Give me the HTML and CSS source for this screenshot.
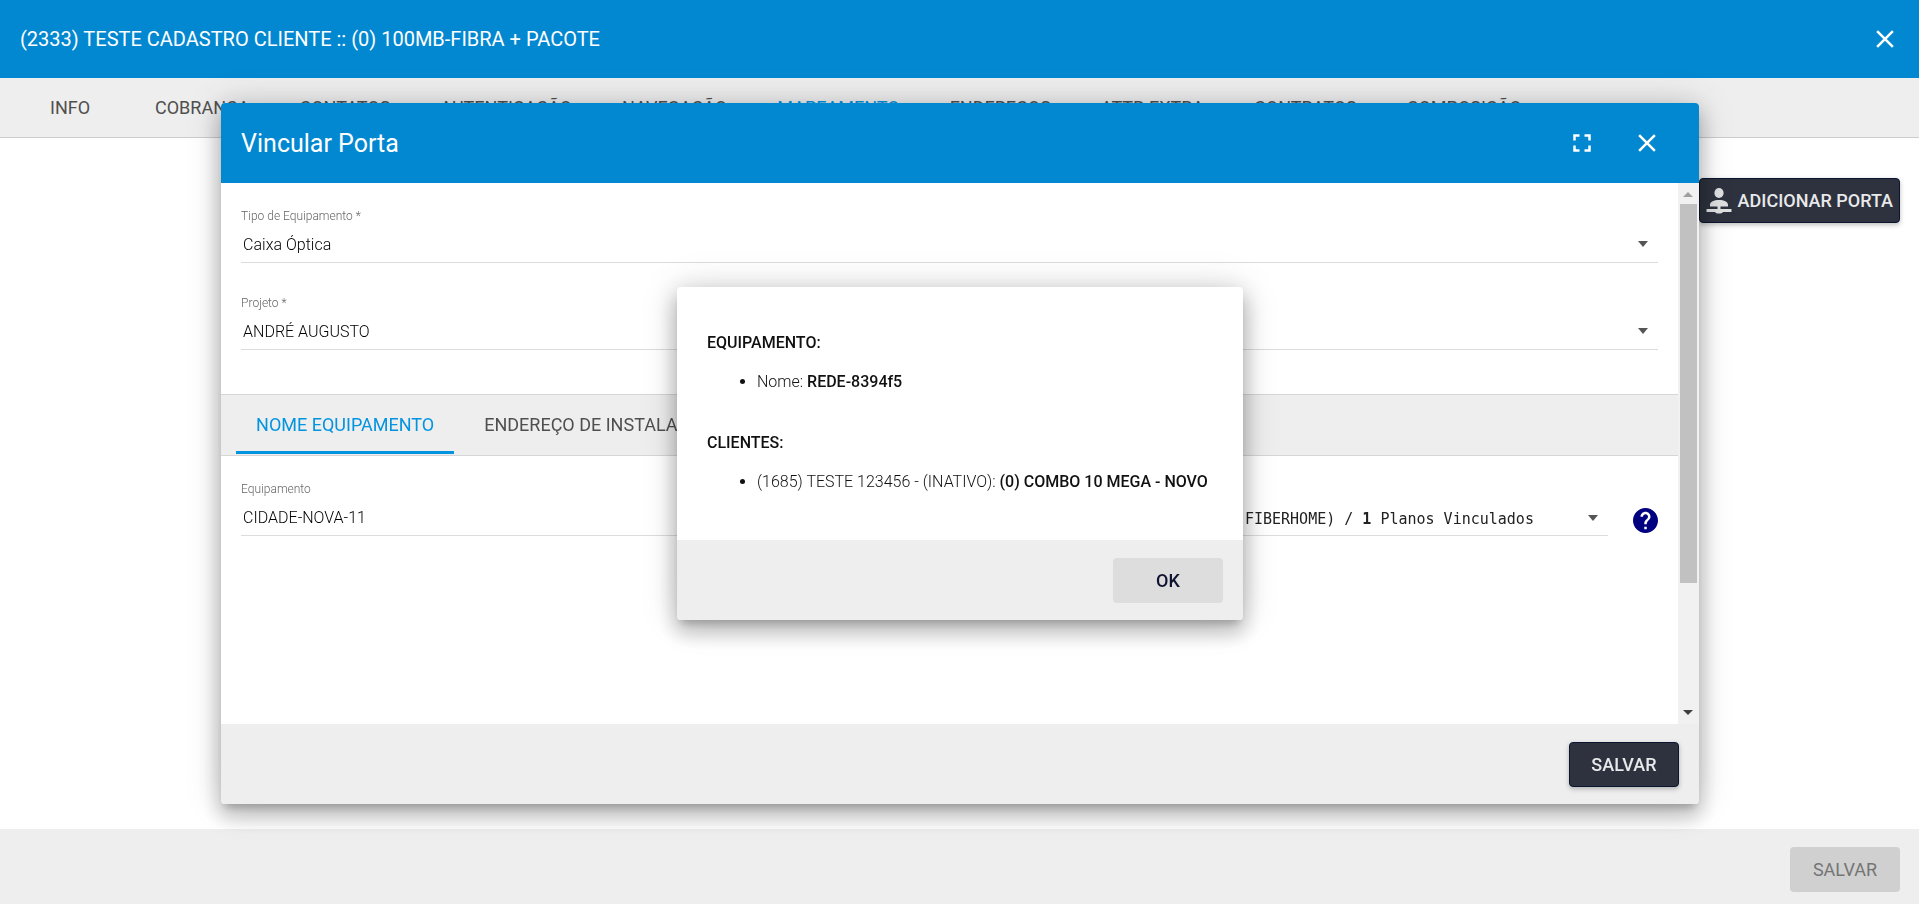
FILE: index.html
```html
<!DOCTYPE html>
<html lang="pt-BR">
<head>
<meta charset="utf-8">
<title>Vincular Porta</title>
<link rel="stylesheet" href="styles.css">
</head>
<body>
<div class="page">
  <header class="page-header">
    <h1 class="page-title">(2333) TESTE CADASTRO CLIENTE :: (0) 100MB-FIBRA + PACOTE</h1>
    <button class="icon-button" type="button" aria-label="Fechar">
      <svg class="icon" viewBox="0 0 24 24"><path d="M19 6.41 17.59 5 12 10.59 6.41 5 5 6.41 10.59 12 5 17.59 6.41 19 12 13.41 17.59 19 19 17.59 13.41 12z"/></svg>
    </button>
  </header>
  <nav class="tabs page-tabs">
    <button class="tab" type="button">INFO</button>
    <button class="tab" type="button">COBRANÇA</button>
    <button class="tab" type="button">CONTATOS</button>
    <button class="tab" type="button">AUTENTICAÇÃO</button>
    <button class="tab" type="button">NAVEGAÇÃO</button>
    <button class="tab tab-current" type="button">MAPEAMENTO</button>
    <button class="tab" type="button">ENDEREÇOS</button>
    <button class="tab" type="button">ATTR.EXTRA</button>
    <button class="tab" type="button">CONTRATOS</button>
    <button class="tab" type="button">COMPOSIÇÃO</button>
  </nav>
  <main class="page-main">
    <button class="button button-dark button-add" type="button">
      <svg class="add-icon" viewBox="0 0 26 26"><ellipse cx="13" cy="5" rx="4.6" ry="5"/><path d="M4 18.500v-1.500c0-3.500 4-5 9-5s9 1.500 9 5v1.500h-7.500V21H25.500v3H17c-.6 1-2.200 1.600-4 1.600S9.600 25 9 24H.5v-3h11v-2.500z"/></svg>
      ADICIONAR PORTA
    </button>
  </main>
  <footer class="page-footer">
    <button class="button button-disabled" type="button" disabled>SALVAR</button>
  </footer>
</div>

<div class="overlay">
  <section class="dialog" role="dialog" aria-label="Vincular Porta">
    <header class="dialog-header">
      <h2 class="dialog-title">Vincular Porta</h2>
      <button class="icon-button" type="button" aria-label="Tela cheia">
        <svg class="icon" viewBox="0 0 24 24"><path d="M7 14H5v5h5v-2H7v-3zm-2-4h2V7h3V5H5v5zm12 7h-3v2h5v-5h-2v3zM14 5v2h3v3h2V5h-5z"/></svg>
      </button>
      <button class="icon-button" type="button" aria-label="Fechar">
        <svg class="icon" viewBox="0 0 24 24"><path d="M19 6.410 17.590 5 12 10.590 6.410 5 5 6.410 10.590 12 5 17.590 6.410 19 12 13.410 17.590 19 19 17.590 13.410 12z"/></svg>
      </button>
    </header>
    <div class="dialog-body">
      <div class="dialog-content">
        <div class="fields">
          <div class="field">
            <label class="field-label" for="tipo">Tipo de Equipamento *</label>
            <div class="field-box">
              <select class="field-control" id="tipo"><option>Caixa Óptica</option></select>
              <span class="caret"></span>
            </div>
          </div>
          <div class="field">
            <label class="field-label" for="projeto">Projeto *</label>
            <div class="field-box">
              <select class="field-control" id="projeto"><option>ANDRÉ AUGUSTO</option></select>
              <span class="caret"></span>
            </div>
          </div>
        </div>
        <div class="tabs dialog-tabs">
          <button class="tab tab-current" type="button">NOME EQUIPAMENTO</button>
          <button class="tab" type="button">ENDEREÇO DE INSTALAÇÃO</button>
        </div>
        <div class="fields fields-row">
          <div class="field field-grow">
            <label class="field-label" for="equipamento">Equipamento</label>
            <div class="field-box"><input class="field-control" id="equipamento" type="text" value="CIDADE-NOVA-11"></div>
          </div>
          <div class="field field-plan">
            <button class="field-box field-choice" type="button" aria-haspopup="listbox" aria-label="Porta">
              <span class="choice-text">(FIBERHOME) / <b>1</b> Planos Vinculados</span>
              <span class="caret"></span>
            </button>
          </div>
          <button class="help-button" type="button" aria-label="Ajuda">
            <svg class="help-icon" viewBox="2 2 20 20"><path d="M12 2C6.480 2 2 6.480 2 12s4.480 10 10 10 10-4.480 10-10S17.520 2 12 2zm1 17h-2v-2h2v2zm2.070-7.750-.9.920C13.450 12.900 13 13.500 13 15h-2v-.5c0-1.100.450-2.100 1.170-2.830l1.240-1.260c.370-.360.590-.860.590-1.410 0-1.100-.9-2-2-2s-2 .9-2 2H8c0-2.210 1.790-4 4-4s4 1.790 4 4c0 .880-.360 1.680-.930 2.250z"/></svg>
          </button>
        </div>
      </div>
      <div class="scrollbar" aria-hidden="true">
        <span class="scroll-arrow scroll-up"></span>
        <span class="scroll-thumb"></span>
        <span class="scroll-arrow scroll-down"></span>
      </div>
    </div>
    <footer class="dialog-footer">
      <button class="button button-dark" type="button">SALVAR</button>
    </footer>
  </section>
</div>

<div class="overlay">
  <section class="dialog alert" role="alertdialog" aria-label="Equipamento">
    <div class="alert-body">
      <strong class="alert-heading">EQUIPAMENTO:</strong>
      <ul class="alert-list"><li>Nome: <strong>REDE-8394f5</strong></li></ul>
      <strong class="alert-heading">CLIENTES:</strong>
      <ul class="alert-list"><li>(1685) TESTE 123456 - (INATIVO): <strong>(0) COMBO 10 MEGA - NOVO</strong></li></ul>
    </div>
    <footer class="dialog-footer">
      <button class="button button-plain" type="button">OK</button>
    </footer>
  </section>
</div>
</body>
</html>
```
FILE: styles.css
```css
* {
  box-sizing: border-box;
}

body {
  margin: 0;
  font-family: Roboto, "Liberation Sans", sans-serif;
  font-size: 16px;
  font-weight: 300;
  color: #000;
  background: #fff;
}

button,
input,
select {
  font: inherit;
  color: inherit;
  border: 0;
  padding: 0;
  margin: 0;
  background: none;
}

h1,
h2 {
  margin: 0;
}

strong {
  font-weight: 500;
}

.page {
  display: flex;
  flex-direction: column;
  height: 100vh;
}

.page-header {
  display: flex;
  align-items: center;
  justify-content: space-between;
  height: 78px;
  padding: 0 19px 0 20px;
  background: #0288d1;
  color: #fff;
}

.page-title {
  font-size: 20px;
  font-weight: 400;
}

.icon-button {
  display: flex;
}

.icon {
  width: 30px;
  height: 30px;
  fill: #fff;
}

.tabs {
  display: flex;
  gap: 10px;
  background: #eee;
  border-bottom: 1px solid #ccc;
}

.page-tabs {
  height: 60px;
  padding: 0 30px;
}

.tab {
  min-width: 95px;
  padding: 0 20px;
  border-bottom: 3px solid transparent;
  border-top: 3px solid transparent;
  font-size: 18px;
  font-weight: 400;
  text-align: left;
  color: #4f4f4f;
}

.tab-current {
  color: #0394e0;
}

.page-main {
  flex: 1;
  display: flex;
  justify-content: flex-end;
  align-items: flex-start;
  padding: 40px 19px;
}

.page-footer {
  display: flex;
  justify-content: flex-end;
  padding: 18px 19px 12px;
  background: #eee;
}

.button {
  height: 45px;
  min-width: 110px;
  border-radius: 4px;
  font-size: 18px;
  font-weight: 400;
}

.button-dark {
  background: #2d323e;
  border: 1px solid #0a1530;
  color: #e8e9ea;
  font-weight: 500;
  box-shadow: 0 2px 5px rgba(0, 0, 0, 0.26);
}

.button-add {
  display: flex;
  align-items: center;
  gap: 6px;
  padding: 0 6px;
}

.add-icon {
  width: 26px;
  height: 26px;
  fill: #dfe0e2;
}

.button-disabled {
  background: #d0d0d0;
  color: #757575;
}

.button-plain {
  background: #ddd;
  color: #0d1330;
  font-weight: 500;
}

.overlay {
  position: fixed;
  inset: 0;
  display: grid;
  place-items: center;
  padding: 3px 0 0 1px;
}

.dialog {
  width: 77.05%;
  overflow: hidden;
  border-radius: 4px;
  background: #fff;
  box-shadow: 0 7px 8px -4px rgba(0, 0, 0, 0.2), 0 13px 19px 2px rgba(0, 0, 0, 0.14), 0 5px 24px 4px rgba(0, 0, 0, 0.12), 0 0 40px rgba(0, 0, 0, 0.12);
}

.dialog-header {
  display: flex;
  align-items: center;
  gap: 35px;
  height: 80px;
  padding: 0 37px 0 20px;
  background: #0288d1;
  color: #fff;
}

.dialog-title {
  flex: 1;
  font-size: 25px;
  font-weight: 400;
}

.dialog-body {
  display: flex;
  height: 541px;
}

.dialog-content {
  flex: 1;
}

.fields {
  display: flex;
  flex-direction: column;
  gap: 25px;
  padding: 18px 20px 44px;
}

.fields-row {
  flex-direction: row;
  align-items: flex-end;
  gap: 18px;
}

.field {
  display: flex;
  flex-direction: column;
}

.field-grow {
  flex: 1;
}

.field-plan {
  width: 374px;
}

.field-label {
  font-size: 12px;
  line-height: 30px;
  color: #666;
}

.field-box {
  display: flex;
  align-items: center;
  height: 32px;
  padding: 0 10px 4px 2px;
  border-bottom: 1px solid #dcdcdc;
}

.field-control {
  flex: 1;
  appearance: none;
  outline: none;
}

.field-choice {
  padding-bottom: 2px;
  text-align: left;
}

.choice-text {
  flex: 1;
  font-family: "DejaVu Sans Mono", monospace;
  font-size: 15px;
  font-weight: 400;
  white-space: nowrap;
  color: #222;
}

.caret {
  margin-bottom: 2px;
  border: 5px solid transparent;
  border-top: 6px solid #555;
  border-bottom: 0;
}

.help-button {
  display: flex;
  margin: 0 0 3px 7px;
}

.help-icon {
  width: 25px;
  height: 25px;
  fill: #000080;
}

.dialog-tabs {
  height: 62px;
  padding: 0 15px;
  border-top: 1px solid #d6d6d6;
  border-color: #d6d6d6;
}

.dialog-tabs .tab {
  margin-bottom: 1px;
}

.dialog-tabs .tab-current {
  border-bottom-color: #0394e0;
}

.scrollbar {
  display: flex;
  flex-direction: column;
  align-items: center;
  width: 21px;
  padding: 9px 0;
  background: #f1f1f1;
}

.scroll-arrow {
  border: 5px solid transparent;
}

.scroll-up {
  border-top: 0;
  border-bottom-color: #a0a0a0;
}

.scroll-down {
  margin-top: auto;
  border-bottom: 0;
  border-top-color: #404040;
}

.scroll-thumb {
  width: 17px;
  height: 72.5%;
  margin-top: 7px;
  background: #c1c1c1;
}

.dialog-footer {
  display: flex;
  justify-content: flex-end;
  height: 80px;
  padding: 18px 20px;
  background: #eee;
}

.alert {
  width: auto;
  min-width: 566px;
}

.alert-body {
  padding: 44px 30px 9px;
  line-height: 23px;
  color: #111;
}

.alert-list {
  margin: 16px 0 38px;
  padding-left: 50px;
}
```
